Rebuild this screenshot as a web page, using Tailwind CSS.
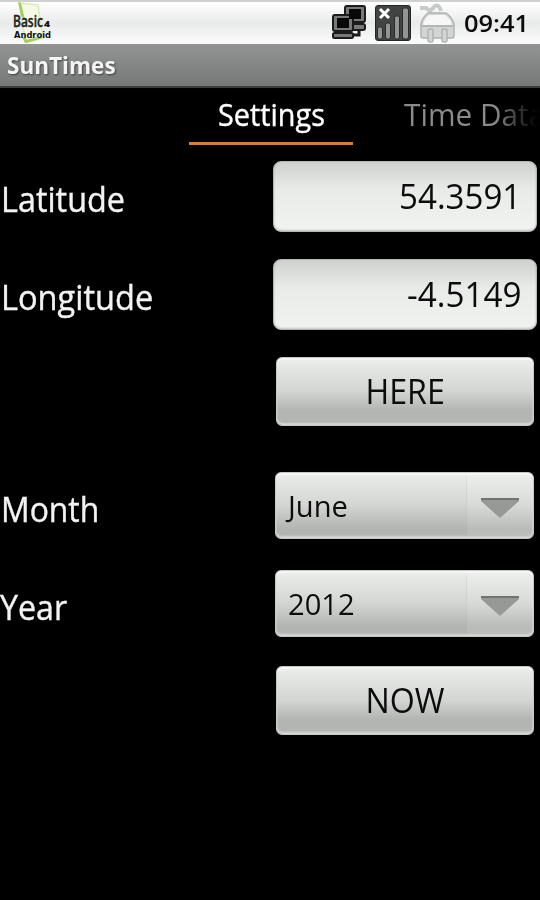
<!DOCTYPE html>
<html lang="en">
<head>
    <meta charset="UTF-8">
    <meta name="viewport" content="width=device-width, initial-scale=1.0">
    <title>SunTimes</title>
    <script src="https://cdn.jsdelivr.net/npm/@tailwindcss/browser@4"></script>
</head>
<body class="bg-black h-[900px] w-[540px] overflow-hidden font-['Open_Sans','Noto_Sans',sans-serif] text-[35px] text-[#0c0c0c]">

    <!-- Status bar -->
    <header class="flex h-11 items-center border-t-2 border-[#cfd1d0] bg-linear-to-b from-white via-[#e9ebea] to-[#fbfcfb] pl-3 pr-1">
        <svg class="h-[42px] w-11" viewBox="0 0 44 42">
            <path d="M8 1 L26 3 L28 18 L31 36 L14 40 L10 22 Z" fill="#f4f9e8" stroke="#d9ebb8" stroke-width="1.5"/>
            <path d="M6 0 L9 1 L13 18 L9 14 Z M10 35 L13 35 L16 41 L13 41 Z M14 38 L30 34 L31 36 L15 41 Z" fill="#a3cf5c"/>
            <text x="1" y="25" font-family="Open Sans" font-size="16" font-weight="600" textLength="30" lengthAdjust="spacingAndGlyphs" fill="#222" stroke="#222" stroke-width="0.4">Basic</text>
            <text x="32" y="25" font-family="Open Sans" font-size="9" font-weight="800" textLength="6" lengthAdjust="spacingAndGlyphs" fill="#111">4</text>
            <text x="2" y="36" font-family="DejaVu Sans" font-size="9" font-weight="700" textLength="37" lengthAdjust="spacingAndGlyphs" fill="#111">Android</text>
        </svg>
        <div class="ml-auto flex items-center">
            <!-- Connected computers -->
            <svg class="h-[38px] w-[36px]" viewBox="331 4 36 38">
                <g fill="#777a79" stroke="#1b1b1b" stroke-width="2">
                    <rect x="345" y="6" width="20" height="16" rx="2"/>
                    <rect x="344" y="24" width="21" height="6" rx="2"/>
                    <path d="M359 30v5h-6" fill="none" stroke-width="3"/>
                    <rect x="333" y="15" width="20" height="16" rx="2"/>
                    <rect x="333" y="33" width="20" height="5" rx="1.5"/>
                </g>
                <rect x="349" y="9" width="12" height="10" fill="#080808"/>
                <rect x="337" y="18" width="12" height="10" fill="#080808"/>
            </svg>
            <!-- Signal -->
            <svg class="ml-2 h-[38px] w-[36px]" viewBox="375 4 36 38">
                <rect x="375.5" y="5.5" width="35" height="35" rx="2.5" fill="#414443" stroke="#242625"/>
                <g fill="#929594" stroke="#292b2a" stroke-width="1">
                    <rect x="377.5" y="27" width="5" height="12" rx="2"/>
                    <rect x="385.5" y="23" width="5" height="16" rx="2"/>
                    <rect x="394.5" y="16" width="5" height="23" rx="2"/>
                    <rect x="402.5" y="8" width="6" height="31" rx="2"/>
                </g>
                <path d="M380 9l9 9M389 9l-9 9" stroke="#fff" stroke-width="3"/>
            </svg>
            <!-- Power plug -->
            <svg class="ml-2 h-[40px] w-[37px]" viewBox="418 3 37 40">
                <path d="M419 8h6l4 3 5-5q4-2 6 5" fill="none" stroke="#c9cbca" stroke-width="4"/>
                <g fill="#d3d5d4" stroke="#b1b3b2" stroke-width="1.5">
                    <path d="M420 36V24q1-6 7-11h18q6 4 8 11v12q0 2-2 2h-29q-2 0-2-2z"/>
                    <rect x="427" y="29" width="5" height="13" rx="2"/>
                    <rect x="441" y="29" width="5" height="13" rx="2"/>
                </g>
                <path d="M422 25q1-6 6-10h16q6 4 7 10z" fill="#f6f7f6"/>
                <path d="M421 26h31" stroke="#aaa" stroke-width="1.5"/>
            </svg>
            <span class="ml-2 w-[72px] origin-left scale-x-[1.06] whitespace-nowrap text-2xl font-semibold">09:41</span>
        </div>
    </header>

    <!-- Title bar -->
    <div class="flex h-11 items-center border-b-2 border-[#3b3d3c] bg-linear-to-b from-[#939594] to-[#757877] pl-[7px]">
        <h1 class="origin-left scale-x-[0.98] text-[23px] font-bold text-[#f4f4f4] text-shadow-[1px_1px_2px_rgb(0_0_0/0.5)]">SunTimes</h1>
    </div>

    <!-- Tabs -->
    <nav class="flex h-[57px] overflow-hidden pl-[189px] text-[31px] leading-[52px] text-white">
        <div class="flex w-[164px] shrink-0 justify-center border-b-[3px] border-[#cd7f44]">
            <span class="scale-x-[0.93] [-webkit-text-stroke:0.4px_white]">Settings</span>
        </div>
        <div class="ml-[51px] w-[136px] shrink-0 whitespace-nowrap">
            <span class="inline-block origin-left scale-x-[0.96] bg-linear-to-r from-[#8b8b8b] from-65% to-black to-100% bg-clip-text text-transparent">Time Data</span>
        </div>
    </nav>

    <main class="pt-4">
        <div class="flex h-[71px]">
            <label class="flex w-[273px] items-center pl-px pt-1.5 text-[#f3f3f3] [-webkit-text-stroke:0.4px_#f3f3f3]"><span class="origin-left scale-x-[0.925]">Latitude</span></label>
            <div class="flex w-[264px] items-center justify-end rounded-lg border border-[#b5b7b5] bg-linear-to-b from-[#cfd1cf] via-[#e9ebe9] via-40% to-[#f1f3f1] pb-px pr-[15px] inset-shadow-[0_-1px_2px_rgb(0_0_0/0.2)]"><span class="origin-right scale-x-[0.945]">54.3591</span></div>
        </div>
        <div class="mt-[27px] flex h-[71px]">
            <label class="flex w-[273px] items-center pl-px pt-1.5 text-[#f3f3f3] [-webkit-text-stroke:0.4px_#f3f3f3]"><span class="origin-left scale-x-[0.93]">Longitude</span></label>
            <div class="flex w-[264px] items-center justify-end rounded-lg border border-[#b5b7b5] bg-linear-to-b from-[#cfd1cf] via-[#e9ebe9] via-40% to-[#f1f3f1] pb-px pr-[14px] inset-shadow-[0_-1px_2px_rgb(0_0_0/0.2)]"><span class="origin-right scale-x-[0.95]">-4.5149</span></div>
        </div>
        <button class="ml-[276px] mt-[27px] flex h-[69px] w-[258px] items-center justify-center rounded-md border border-[#c6c8c6] bg-linear-to-b from-[#eceeec] via-[#d3d5d3] to-[#b2b5b2] to-78% inset-shadow-[0_2px_1px_#f6f7f6,0_-2px_2px_#d6d8d6]"><span class="scale-x-[0.92]">HERE</span></button>

        <div class="mt-[46px] flex h-[67px]">
            <span class="flex w-[275px] items-center pl-px pt-2 text-[#f3f3f3] [-webkit-text-stroke:0.4px_#f3f3f3]"><span class="origin-left scale-x-[0.91]">Month</span></span>
            <div class="flex w-[259px] items-center rounded-md border border-[#c6c8c6] bg-linear-to-b from-[#eceeec] via-[#d3d5d3] to-[#b2b5b2] to-85% pl-3 text-[30px] inset-shadow-[0_2px_1px_#f6f7f6,0_-2px_2px_#d6d8d6]">
                <span class="origin-left scale-x-[0.97]">June</span>
                <div class="ml-auto flex h-[59px] w-[67px] items-center justify-center border-l border-black/5 bg-white/10">
                    <svg class="mt-1 h-5 w-[38px]" viewBox="0 0 38 20">
                        <path d="M0 0h38v3L19 20 0 3z" fill="#969996"/>
                        <path d="M0 0h38v2H0z" fill="#707370"/>
                    </svg>
                </div>
            </div>
        </div>
        <div class="mt-[31px] flex h-[67px]">
            <span class="flex w-[275px] items-center pt-2 text-[#f3f3f3] [-webkit-text-stroke:0.4px_#f3f3f3]"><span class="origin-left scale-x-[0.92]">Year</span></span>
            <div class="flex w-[259px] items-center rounded-md border border-[#c6c8c6] bg-linear-to-b from-[#eceeec] via-[#d3d5d3] to-[#b2b5b2] to-85% pl-3 text-[30px] inset-shadow-[0_2px_1px_#f6f7f6,0_-2px_2px_#d6d8d6]">
                <span class="origin-left scale-x-[0.97]">2012</span>
                <div class="ml-auto flex h-[59px] w-[67px] items-center justify-center border-l border-black/5 bg-white/10">
                    <svg class="mt-1 h-5 w-[38px]" viewBox="0 0 38 20">
                        <path d="M0 0h38v3L19 20 0 3z" fill="#969996"/>
                        <path d="M0 0h38v2H0z" fill="#707370"/>
                    </svg>
                </div>
            </div>
        </div>
        <button class="ml-[276px] mt-[29px] flex h-[69px] w-[258px] items-center justify-center rounded-md border border-[#c6c8c6] bg-linear-to-b from-[#eceeec] via-[#d3d5d3] to-[#b2b5b2] to-78% inset-shadow-[0_2px_1px_#f6f7f6,0_-2px_2px_#d6d8d6]"><span class="scale-x-[0.92]">NOW</span></button>
    </main>
</body>
</html>
